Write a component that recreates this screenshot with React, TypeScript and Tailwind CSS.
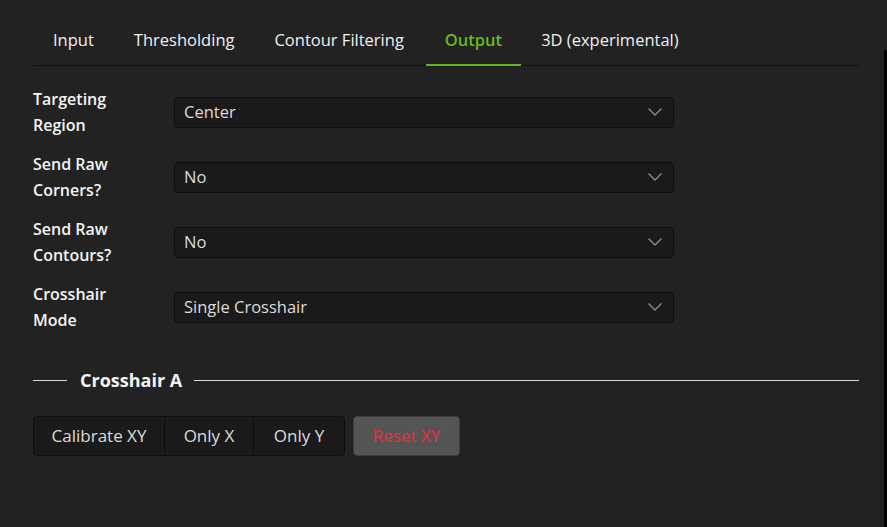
import React from "react";

const font = { fontFamily: '"Open Sans", "Noto Sans", sans-serif' };

function Chevron() {
  return (
    <svg width="16" height="10" viewBox="0 0 16 10" fill="none">
      <path d="M1.5 1.5 L8 8 L14.5 1.5" stroke="#8a8a8a" strokeWidth="1.4" />
    </svg>
  );
}

function SelectRow({ label, value }: { label: string[]; value: string }) {
  return (
    <div className="flex items-center h-[52px]">
      <div className="w-[141px] text-[16px] leading-[26px] font-semibold text-[#f4f4f4]">
        {label.map((l, i) => (
          <div key={i}>{l}</div>
        ))}
      </div>
      <div className="w-[500px] h-[31px] flex items-center justify-between rounded-[4px] border border-[#0e0e0e] bg-[#1a1a1a] pl-[9px] pr-[10px]">
        <span className="text-[16.5px] text-[#dcdcdc]">{value}</span>
        <Chevron />
      </div>
    </div>
  );
}

export default function App() {
  const tabs = ["Input", "Thresholding", "Contour Filtering", "Output", "3D (experimental)"];
  return (
    <div className="w-[887px] h-[527px] bg-[#222222] flex" style={font}>
      <div className="flex-1 pl-[33px] pr-[25px]">
        <div className="flex h-[66px] border-b border-[#111111] pt-[16px]">
          {tabs.map((t) => {
            const active = t === "Output";
            return (
              <div
                key={t}
                className={
                  active
                    ? "ml-[2px] px-[19px] h-[50px] flex items-center text-[16.5px] font-semibold text-[#6ab81f] border-b-2 border-[#62b41a] -mb-px"
                    : "px-[20px] h-[49px] flex items-center text-[16.5px] text-[#f0f0f0]"
                }
              >
                {t}
              </div>
            );
          })}
        </div>
        <div className="flex flex-col gap-[13px] pt-[20px]">
          <SelectRow label={["Targeting", "Region"]} value="Center" />
          <SelectRow label={["Send Raw", "Corners?"]} value="No" />
          <SelectRow label={["Send Raw", "Contours?"]} value="No" />
          <SelectRow label={["Crosshair", "Mode"]} value="Single Crosshair" />
        </div>
        <div className="flex items-center mt-[34px] h-[26px]">
          <div className="w-[34px] h-px bg-[#d8d8d8]" />
          <div className="pl-[13px] pr-[12px] text-[18px] font-bold text-[#f4f4f4]">Crosshair A</div>
          <div className="flex-1 h-px bg-[#d8d8d8]" />
        </div>
        <div className="flex mt-[23px] gap-[8px]">
          <div className="flex h-[40px] rounded-[4px] border border-[#0e0e0e] bg-[#1a1a1a] overflow-hidden">
            <div className="w-[131px] flex items-center justify-center text-[17px] text-[#dcdcdc] border-r border-[#0e0e0e]">
              Calibrate XY
            </div>
            <div className="w-[89px] flex items-center justify-center text-[17px] text-[#dcdcdc] border-r border-[#0e0e0e]">
              Only X
            </div>
            <div className="w-[90px] flex items-center justify-center text-[17px] text-[#dcdcdc]">
              Only Y
            </div>
          </div>
          <div className="w-[107px] h-[40px] flex items-center justify-center rounded-[4px] border border-[#3c3c3c] bg-[#555555] text-[17px] text-[#ec2d3a]">
            Reset XY
          </div>
        </div>
      </div>
      <div className="w-[3px] flex flex-col">
        <div className="h-[50px]" />
        <div className="flex-1 bg-black" />
      </div>
    </div>
  );
}
